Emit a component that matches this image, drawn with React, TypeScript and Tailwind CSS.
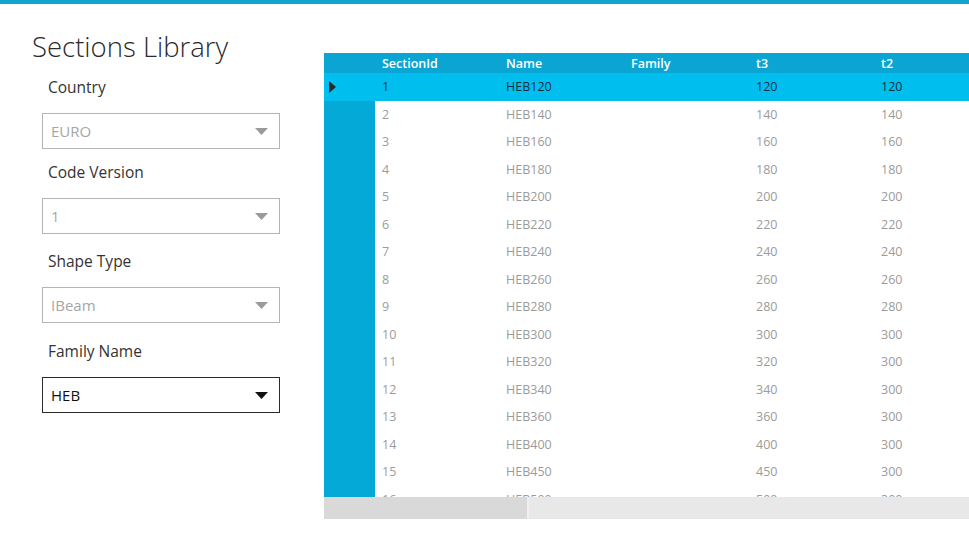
import React from "react";

const rows: [string, string, string, string][] = [
  ["1", "HEB120", "120", "120"],
  ["2", "HEB140", "140", "140"],
  ["3", "HEB160", "160", "160"],
  ["4", "HEB180", "180", "180"],
  ["5", "HEB200", "200", "200"],
  ["6", "HEB220", "220", "220"],
  ["7", "HEB240", "240", "240"],
  ["8", "HEB260", "260", "260"],
  ["9", "HEB280", "280", "280"],
  ["10", "HEB300", "300", "300"],
  ["11", "HEB320", "320", "300"],
  ["12", "HEB340", "340", "300"],
  ["13", "HEB360", "360", "300"],
  ["14", "HEB400", "400", "300"],
  ["15", "HEB450", "450", "300"],
  ["16", "HEB500", "500", "300"],
];

function Arrow({ dark }: { dark?: boolean }) {
  return (
    <svg width="13" height="7" viewBox="0 0 13 7" className="shrink-0">
      <polygon points="0,0 13,0 6.5,7" fill={dark ? "#111111" : "#9a9a9a"} />
    </svg>
  );
}

function Combo({ value, active }: { value: string; active?: boolean }) {
  return (
    <div
      className={
        "ml-[42px] w-[238px] h-[36px] flex items-center justify-between pl-[8px] pr-[11px] " +
        (active
          ? "border-[1.5px] border-[#2b2b2b] text-[#111111]"
          : "border border-[#b4b4b4] text-[#a6a6a6]")
      }
    >
      <span className="text-[15px] leading-none">{value}</span>
      <Arrow dark={active} />
    </div>
  );
}

function Label({ text, mt }: { text: string; mt: string }) {
  return (
    <div className={"ml-[48px] h-[24px] leading-[24px] text-[15.5px] text-[#333333] " + mt}>
      {text}
    </div>
  );
}

export default function App() {
  return (
    <div
      className="w-[969px] h-[545px] bg-white overflow-hidden flex flex-col"
      style={{ fontFamily: '"Open Sans", "Noto Sans", sans-serif' }}
    >
      <div className="h-[4px] bg-[#12a6cf] shrink-0" />
      <div className="flex flex-1">
        {/* Left panel */}
        <div className="w-[324px] shrink-0 flex flex-col">
          <div className="ml-[32px] mt-[26px] h-[34px] leading-[34px] text-[27.5px] font-light text-[#2a2a2a]">
            Sections Library
          </div>
          <Label text="Country" mt="mt-[11px]" />
          <div className="mt-[14px]">
            <Combo value="EURO" />
          </div>
          <Label text="Code Version" mt="mt-[11px]" />
          <div className="mt-[14px]">
            <Combo value="1" />
          </div>
          <Label text="Shape Type" mt="mt-[15px]" />
          <div className="mt-[14px]">
            <Combo value="IBeam" />
          </div>
          <Label text="Family Name" mt="mt-[16px]" />
          <div className="mt-[14px]">
            <Combo value="HEB" active />
          </div>
        </div>

        {/* Grid */}
        <div className="flex-1 mt-[49px] flex flex-col overflow-hidden">
          <div className="h-[20px] bg-[#0aa5d3] flex text-white text-[12.5px] font-semibold leading-[21px] shrink-0">
            <div className="w-[51px] shrink-0" />
            <div className="w-[125px] shrink-0 pl-[7px]">SectionId</div>
            <div className="w-[125px] shrink-0 pl-[6px]">Name</div>
            <div className="w-[125px] shrink-0 pl-[6px]">Family</div>
            <div className="w-[125px] shrink-0 pl-[6px]">t3</div>
            <div className="w-[125px] shrink-0 pl-[6px]">t2</div>
          </div>
          <div className="h-[424px] overflow-hidden flex shrink-0">
            <div className="flex flex-col w-full">
              {rows.map((r, i) => {
                const sel = i === 0;
                return (
                  <div
                    key={i}
                    className={
                      "h-[27.5px] shrink-0 flex items-center text-[12.5px] " +
                      (sel ? "bg-[#00bfef] text-[#14303f]" : "text-[#9b9b9b]")
                    }
                  >
                    <div
                      className={
                        "w-[51px] h-full shrink-0 flex items-center pl-[5px] " +
                        (sel ? "" : "bg-[#04a9d7]")
                      }
                    >
                      {sel && (
                        <svg width="7" height="12" viewBox="0 0 7 12">
                          <polygon points="0,0 7,6 0,12" fill="#2a2a2a" />
                        </svg>
                      )}
                    </div>
                    <div className="w-[125px] shrink-0 pl-[7px] pt-[2px]">{r[0]}</div>
                    <div className="w-[125px] shrink-0 pl-[6px] pt-[2px]">{r[1]}</div>
                    <div className="w-[125px] shrink-0 pl-[6px] pt-[2px]"></div>
                    <div className="w-[125px] shrink-0 pl-[6px] pt-[2px]">{r[2]}</div>
                    <div className="w-[125px] shrink-0 pl-[6px] pt-[2px]">{r[3]}</div>
                  </div>
                );
              })}
            </div>
          </div>
          <div className="h-[22px] bg-[#e8e8e8] flex shrink-0">
            <div className="w-[205px] h-full bg-[#d9d9d9] border-r-2 border-[#f0f0f0]" />
          </div>
        </div>
      </div>
    </div>
  );
}
